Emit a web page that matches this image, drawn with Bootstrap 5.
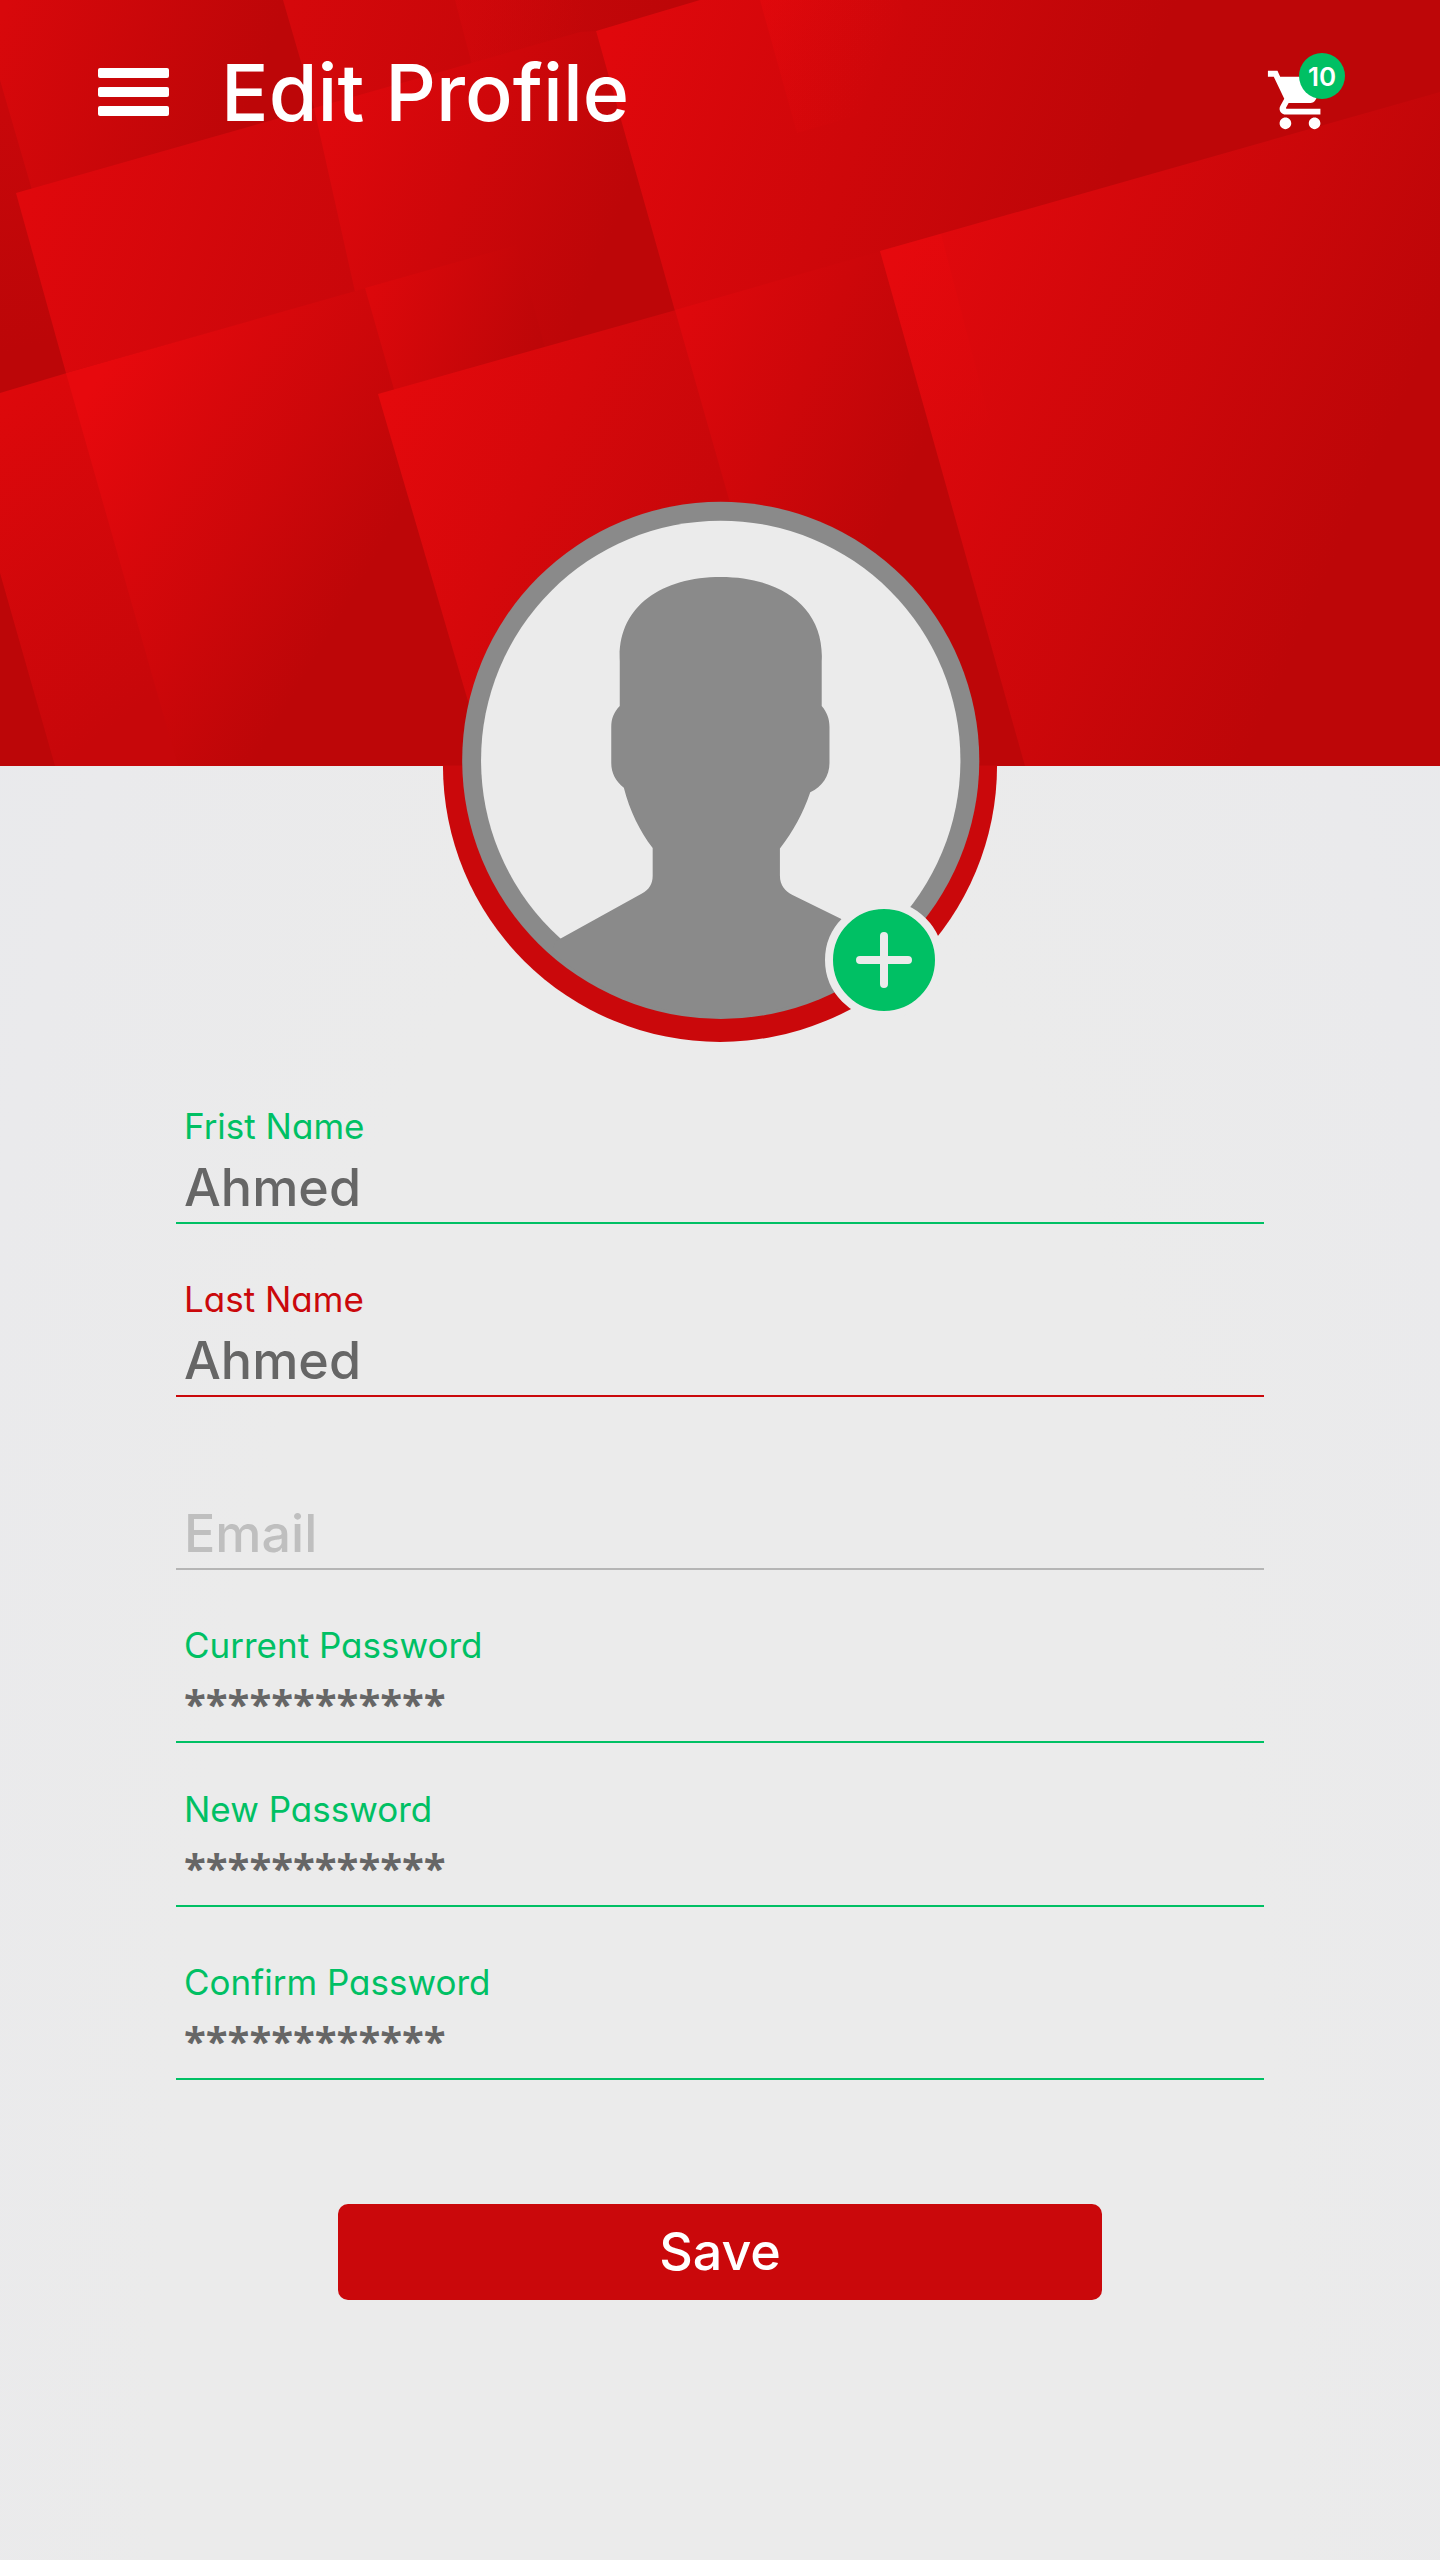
<!DOCTYPE html>
<html lang="en">
<head>
<meta charset="utf-8">
<meta name="viewport" content="width=device-width, initial-scale=1">
<title>Edit Profile</title>
<link rel="stylesheet" href="https://cdn.jsdelivr.net/npm/bootstrap@5.3.0/dist/css/bootstrap.min.css">
<style>
:root { --brand-red: #ca080b; --brand-green: #00c064; --ink: #666; --paper: #ebebeb; }
body { font-family: Inter, "Liberation Sans", sans-serif; font-feature-settings: "cv11" 1; color: var(--ink);
  background: radial-gradient(ellipse 39% 66% at 50% 98%, #ebebeb 100%, #eaeaec 150%, #e7e9ec 210%) var(--paper); }
.hero { height: 766px; background: #bd0608; }
.hero-art { z-index: 0; }
.top-bar { padding: 49px 95px 0 98px; z-index: 1; }
.bar-left { gap: 52px; }
.page-title { font-size: 79px; line-height: 86px; font-weight: 500; }
.cart-link { width: 80px; height: 86px; padding-top: 16px; }
.cart-count { left: 34px; top: 4px; width: 46px; height: 46px; font-size: 26px; background: var(--brand-green); }
.avatar { width: 580px; margin: -286px auto 0; z-index: 2; }
.avatar-add { left: 395px; top: 421px; width: 118px; height: 118px; border: 8px solid var(--paper); background: var(--brand-green); }
.profile-form { padding: 46px 176px 0; }
.field { margin-bottom: 55px; --tone: var(--brand-green); }
.field-tight { margin-bottom: 46px; }
.field-error { --tone: var(--brand-red); }
.field-idle { --tone: #b5b5b5; }
.field label { display: block; padding-left: 8px; font-size: 35px; line-height: 40px; color: var(--tone); }
.field .form-control { height: 78px; padding: 6px 8px 0; border: 0; border-bottom: 2px solid var(--tone); border-radius: 0;
  background: transparent; font-size: 52px; line-height: 68px; font-weight: 500; color: var(--ink); }
.field .form-control::placeholder { color: #bfbfbf; opacity: 1; }
.field .secret { padding: 0 8px; font-family: "Open Sans", sans-serif; font-size: 40px; font-weight: 700; }
.save-btn { width: 764px; height: 96px; margin-top: 69px; border-radius: 10px; background: var(--brand-red); color: #fff;
  font-size: 52px; line-height: 60px; font-weight: 500; }
.save-btn:hover { background: #b00709; color: #fff; }
</style>
</head>
<body class="min-vh-100">
<header class="hero position-relative overflow-hidden">
  <svg class="hero-art position-absolute top-0 start-0 w-100 h-100" viewBox="0 0 1440 766" preserveAspectRatio="none" aria-hidden="true">
    <defs>
      <linearGradient id="g0" gradientUnits="userSpaceOnUse" x1="0" y1="20" x2="250" y2="110"><stop stop-color="#d8080b"/><stop offset="1" stop-color="#bd0608"/></linearGradient>
      <linearGradient id="g1" gradientUnits="userSpaceOnUse" x1="0" y1="100" x2="60" y2="340"><stop stop-color="#c8070a"/><stop offset="1" stop-color="#bc0608"/></linearGradient>
      <linearGradient id="g2" gradientUnits="userSpaceOnUse" x1="290" y1="10" x2="640" y2="110"><stop stop-color="#d5080b"/><stop offset="1" stop-color="#bd0608"/></linearGradient>
      <linearGradient id="g3" gradientUnits="userSpaceOnUse" x1="20" y1="190" x2="370" y2="310"><stop stop-color="#e0080c"/><stop offset="1" stop-color="#c8070a"/></linearGradient>
      <linearGradient id="g4" gradientUnits="userSpaceOnUse" x1="320" y1="120" x2="610" y2="240"><stop stop-color="#df080c"/><stop offset="1" stop-color="#bd0608"/></linearGradient>
      <linearGradient id="g5" gradientUnits="userSpaceOnUse" x1="0" y1="400" x2="200" y2="660"><stop stop-color="#dd080b"/><stop offset="1" stop-color="#c7070a"/></linearGradient>
      <linearGradient id="g6" gradientUnits="userSpaceOnUse" x1="90" y1="390" x2="375" y2="560"><stop stop-color="#e7090d"/><stop offset="1" stop-color="#bd0608"/></linearGradient>
      <linearGradient id="g7" gradientUnits="userSpaceOnUse" x1="370" y1="290" x2="540" y2="350"><stop stop-color="#dc080b"/><stop offset="1" stop-color="#bd0608"/></linearGradient>
      <linearGradient id="g8" gradientUnits="userSpaceOnUse" x1="610" y1="30" x2="1110" y2="200"><stop stop-color="#e0080c"/><stop offset="1" stop-color="#bd0608"/></linearGradient>
      <linearGradient id="g9" gradientUnits="userSpaceOnUse" x1="380" y1="395" x2="700" y2="540"><stop stop-color="#e4090c"/><stop offset="1" stop-color="#c7070a"/></linearGradient>
      <linearGradient id="g10" gradientUnits="userSpaceOnUse" x1="680" y1="320" x2="930" y2="430"><stop stop-color="#de080c"/><stop offset="1" stop-color="#bd0608"/></linearGradient>
      <linearGradient id="g11" gradientUnits="userSpaceOnUse" x1="890" y1="270" x2="1370" y2="480"><stop stop-color="#e2090d"/><stop offset="1" stop-color="#bd0608"/></linearGradient>
      <linearGradient id="g12" gradientUnits="userSpaceOnUse" x1="455" y1="20" x2="580" y2="50"><stop stop-color="#e5090d" stop-opacity=".25"/><stop offset="1" stop-color="#e5090d" stop-opacity="0"/></linearGradient>
      <linearGradient id="g13" gradientUnits="userSpaceOnUse" x1="765" y1="0" x2="890" y2="60"><stop stop-color="#f0090d" stop-opacity=".35"/><stop offset="1" stop-color="#e5090d" stop-opacity="0"/></linearGradient>
      <linearGradient id="g14" gradientUnits="userSpaceOnUse" x1="900" y1="240" x2="980" y2="440"><stop stop-color="#f0090d" stop-opacity=".25"/><stop offset="1" stop-color="#f0090d" stop-opacity="0"/></linearGradient>
    </defs>
    <path fill="url(#g0)" d="M0 0H300V200H0z"/>
    <path fill="url(#g1)" d="M0 80L32 190L66 373L0 393z"/>
    <path fill="url(#g2)" d="M283 0H700L596 31L315 110z"/>
    <path fill="url(#g12)" d="M455 0H580L590 30L472 65z"/>
    <path fill="url(#g3)" d="M16 193L315 108L366 289L66 373z"/>
    <path fill="url(#g4)" d="M314 108L580 32L596 31L676 312L378 395z"/>
    <path fill="#bc0608" d="M0 573L55 766H0z"/>
    <path fill="url(#g5)" d="M0 393L67 373L180 766H55L0 573z"/>
    <path fill="url(#g6)" d="M66 373L366 288L396 392L490 766H178z"/>
    <path fill="url(#g7)" d="M365 288L517 245L545 348L395 393z"/>
    <path fill="url(#g8)" d="M596 31L700 0H1440V94L880 252L675 311z"/>
    <path fill="url(#g13)" d="M760 0H900L925 96L797 133z"/>
    <path fill="url(#g9)" d="M378 394L676 310L806 766H487z"/>
    <path fill="url(#g10)" d="M675 310L881 251L1030 766H805z"/>
    <path fill="url(#g11)" d="M880 251L1440 92V766H1025z"/>
    <path fill="url(#g14)" d="M880 251L941 234L1000 460L945 480z"/>
  </svg>
  <nav class="top-bar position-relative d-flex align-items-center justify-content-between" aria-label="Main">
    <div class="bar-left d-flex align-items-center">
      <button type="button" class="btn p-0 border-0 d-flex" aria-label="Menu">
        <svg width="71" height="48" viewBox="0 0 71 48" fill="#fff"><rect width="71" height="10" rx="2"/><rect y="19" width="71" height="10" rx="2"/><rect y="38" width="71" height="10" rx="2"/></svg>
      </button>
      <h1 class="page-title text-white text-nowrap m-0">Edit Profile</h1>
    </div>
    <a href="#cart" class="cart-link position-relative d-block text-white text-decoration-none" aria-label="Cart, 10 items">
      <svg class="d-block" width="70" height="70" viewBox="0 0 24 24" fill="#fff"><path d="M7 18c-1.1 0-1.99.9-1.99 2S5.9 22 7 22s2-.9 2-2-.9-2-2-2zM1 2v2h2l3.6 7.59-1.35 2.45c-.16.28-.25.61-.25.96 0 1.1.9 2 2 2h12v-2H7.42c-.14 0-.25-.11-.25-.25l.03-.12.9-1.63h7.45c.75 0 1.41-.41 1.75-1.03l3.58-6.49A1 1 0 0 0 20 4H5.21l-.94-2H1zm16 16c-1.1 0-1.99.9-1.99 2s.89 2 1.99 2 2-.9 2-2-.9-2-2-2z"/></svg>
      <span class="cart-count position-absolute rounded-circle d-flex align-items-center justify-content-center fw-semibold">10</span>
    </a>
  </nav>
</header>
<main>
  <div class="avatar position-relative">
    <svg class="d-block w-100" viewBox="0 0 1568 1568" role="img" aria-label="Profile photo">
      <path fill="#ca080b" d="M35 772A749 747 0 0 0 1533 772z"/>
      <circle cx="786" cy="758" r="699" fill="#8a8a8a"/>
      <circle cx="786" cy="758" r="648" fill="#ebebeb"/>
      <clipPath id="face"><circle cx="786" cy="758" r="690"/></clipPath>
      <path clip-path="url(#face)" fill="#8a8a8a" d="M786 262C950 262 1067 345 1059 490V611C1073 628 1080 645 1080 668V765C1080 800 1060 830 1028 844C1008 902 982 950 946 996V1070C946 1096 960 1112 980 1122L1240 1250L1300 1500H250L340 1246L352 1240L573 1118C592 1108 602 1092 602 1070V995C566 948 540 894 524 832C502 814 490 792 490 765V668C490 645 497 628 513 611V490C505 345 622 262 786 262z"/>
    </svg>
    <button type="button" class="avatar-add position-absolute rounded-circle p-0 d-flex align-items-center justify-content-center" aria-label="Add photo">
      <svg width="56" height="56" viewBox="0 0 56 56" stroke="#ebebeb" stroke-width="8" stroke-linecap="round"><path d="M28 4V52M4 28H52"/></svg>
    </button>
  </div>
  <form class="profile-form">
    <div class="field">
      <label for="first-name">Frist Name</label>
      <input id="first-name" type="text" class="form-control" value="Ahmed">
    </div>
    <div class="field field-error">
      <label for="last-name">Last Name</label>
      <input id="last-name" type="text" class="form-control" value="Ahmed">
    </div>
    <div class="field field-idle">
      <label for="email" class="opacity-0">Email</label>
      <input id="email" type="email" class="form-control" placeholder="Email">
    </div>
    <div class="field field-tight">
      <label for="current-password">Current Password</label>
      <input id="current-password" type="text" class="form-control secret" value="************" autocomplete="off">
    </div>
    <div class="field">
      <label for="new-password">New Password</label>
      <input id="new-password" type="text" class="form-control secret" value="************" autocomplete="off">
    </div>
    <div class="field">
      <label for="confirm-password">Confirm Password</label>
      <input id="confirm-password" type="text" class="form-control secret" value="************" autocomplete="off">
    </div>
    <div class="d-flex justify-content-center pb-5">
      <button type="submit" class="btn save-btn border-0">Save</button>
    </div>
  </form>
</main>
<script src="https://cdn.jsdelivr.net/npm/bootstrap@5.3.0/dist/js/bootstrap.bundle.min.js"></script>
</body>
</html>
